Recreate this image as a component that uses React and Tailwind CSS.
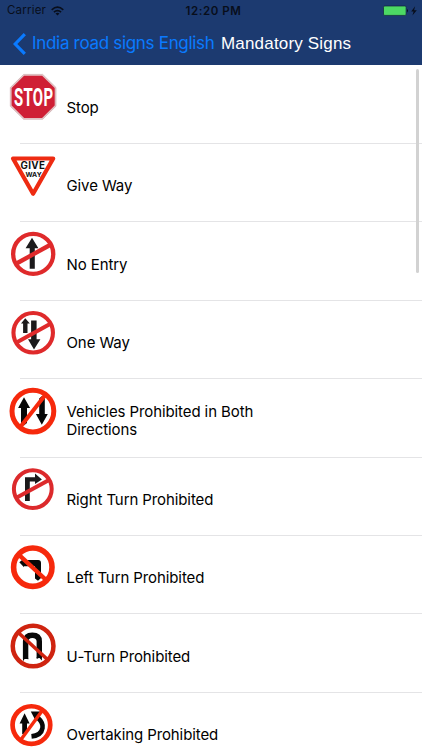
import clsx from 'clsx';

// Red ring with the diagonal bar drawn over the symbol
const Prohibited = ({ cx, cy, r, width, color, bar, barWidth, children }) => (
  <>
    <circle cx={cx} cy={cy} r={r - width / 2} fill="#fff" />
    {children}
    <path d={bar} stroke={color} strokeWidth={barWidth || width} />
    <circle cx={cx} cy={cy} r={r - width / 2} fill="none" stroke={color} strokeWidth={width} />
  </>
);

const StopSign = () => (
  <g transform="translate(0 -0.9)">
    <path d="M23.6 9.3H42.7L56 22.4V41.1L42.7 54.2H23.6L10.3 41.1V22.4Z" fill="#e4c4c6" stroke="#c8a4a6" strokeWidth="0.6" />
    <path d="M24.1 10.7H42.1L54.7 23V40.5L42.1 52.8H24.1L11.6 40.5V23Z" fill="#cf1f35" />
    <text transform="translate(33.7 41) scale(0.585 1)" textAnchor="middle" fill="#fff" className="font-['Roboto'] text-[25.5px] font-bold tracking-[0.5px]">STOP</text>
  </g>
);

const GiveWaySign = () => (
  <>
    <path d="M13 14.5H53.2L33.1 49.8Z" fill="#fff" stroke="#ee2b12" strokeWidth="4.2" strokeLinejoin="round" />
    <text x="32.9" y="25.4" textAnchor="middle" fill="#111" className="font-['Inter'] text-[9.8px] font-bold tracking-[0.3px]">GIVE</text>
    <text x="33.6" y="33" textAnchor="middle" fill="#111" className="font-['Inter'] text-[6.8px] font-bold">WAY</text>
  </>
);

const NoEntrySign = () => (
  <Prohibited cx={33.2} cy={31.9} r={22.2} width={4.3} color="#df2a2b" bar="M16.5 41.5L50 23">
    <path d="M32 15.8L38.4 26.2H34.8V46.8H29.7V26.2H25.6Z" fill="#1c1a1b" />
  </Prohibited>
);

const OneWaySign = () => (
  <Prohibited cx={33.2} cy={31.8} r={21.8} width={4.1} color="#df2a2b" bar="M16.5 41.5L50 23">
    <path d="M25.3 17.3L29.8 22.5H27.5V32H23.1V22.5H21Z" fill="#1c1a1b" />
    <path d="M31.1 19.5H36.6V38.2H40.4L34 48.6L28 38.2H31.1Z" fill="#1c1a1b" />
  </Prohibited>
);

const BothDirectionsSign = () => (
  <Prohibited cx={32.9} cy={32.1} r={23.4} width={5} color="#f6290c" bar="M20.5 47.8L44.7 16.7" barWidth={4}>
    <path d="M24 18.3L30.1 29H27V44L23.8 46.5L21 44V29H18.1Z" fill="#080808" />
    <path d="M39.2 19.5L42 17L44.8 19.5V35H47.8L41.8 45.8L35.9 35H39.2Z" fill="#080808" />
  </Prohibited>
);

const RightTurnSign = () => (
  <Prohibited cx={32.8} cy={31.1} r={20.9} width={4} color="#dc2a2c" bar="M15.5 40.3L49.5 21.8">
    <path d="M25 43.1V19.2H35V15.5L41.9 21.6L35 26V23.6H29.8V43.1Z" fill="#1c1a1b" />
  </Prohibited>
);

const LeftTurnSign = () => (
  <Prohibited cx={32.8} cy={31.2} r={22} width={5.6} color="#f6290c" bar="M18.4 18.4L47.2 45" barWidth={4.4}>
    <path d="M19.3 26.2L24 22.4V24H38.2Q41 24 41 27V42L38 44.8L35 42.6V30.2H24V31.2Z" fill="#080808" />
  </Prohibited>
);

const UTurnSign = () => (
  <Prohibited cx={33.1} cy={32} r={22.6} width={4.5} color="#cf2410" bar="M18.5 18.7L48 46" barWidth={3.6}>
    <path d="M25.6 45V27.5Q25.6 21.2 32.3 21.2Q39.3 21.2 39.3 27.5V44" fill="none" stroke="#080808" strokeWidth="5.4" />
    <path d="M23 47.3V44H28.2V45.5L25.5 43.8ZM36.7 43H41.9V46.6L39.3 43.8L36.7 45Z" fill="#080808" />
  </Prohibited>
);

const OvertakingSign = () => (
  <Prohibited cx={31.4} cy={32.1} r={21.2} width={4.7} color="#f6290c" bar="M21 46.5L42 18" barWidth={3.4}>
    <path d="M24.6 20.3L29.6 30.4H27V41H22.2V30.4H19.6Z" fill="#080808" />
    <path d="M38 25Q43.4 29.7 42.5 35Q41.3 42.3 31.5 43.4" fill="none" stroke="#080808" strokeWidth="4.6" />
    <path d="M30.8 18.6H40.6L36 28.4Z" fill="#080808" />
  </Prohibited>
);

const signs = [
  { name: 'Stop', Icon: StopSign },
  { name: 'Give Way', Icon: GiveWaySign },
  { name: 'No Entry', Icon: NoEntrySign },
  { name: 'One Way', Icon: OneWaySign },
  { name: 'Vehicles Prohibited in Both Directions', Icon: BothDirectionsSign, twoLines: true },
  { name: 'Right Turn Prohibited', Icon: RightTurnSign },
  { name: 'Left Turn Prohibited', Icon: LeftTurnSign },
  { name: 'U-Turn Prohibited', Icon: UTurnSign },
  { name: 'Overtaking Prohibited', Icon: OvertakingSign },
];

const StatusBar = () => (
  <div className="grid h-[22px] grid-cols-3 items-center pl-[7px] pr-[3px] text-[11.5px] leading-none text-[#080e1b]">
    <div className="flex items-center gap-[5px]">
      <span className="tracking-[0.2px]">Carrier</span>
      <svg width="13" height="10" viewBox="0 0 13 10" fill="none" stroke="currentColor" strokeWidth="1.6">
        <path d="M0.7 3.8Q6.5 -1.4 12.3 3.8" />
        <path d="M2.9 6.1Q6.5 3 10.1 6.1" />
        <path d="M6.5 9.6L4.5 7.6Q6.5 6 8.5 7.6Z" fill="currentColor" stroke="none" />
      </svg>
    </div>
    <span className="pl-px pt-px text-center font-semibold tracking-[0.55px]">12:20 PM</span>
    <div className="flex justify-end">
      <svg width="36" height="12" viewBox="0 0 36 12">
        <rect x="0.5" y="1" width="22.6" height="9.4" rx="1.2" fill="#4cd964" stroke="#10213a" strokeWidth="0.7" />
        <path d="M24 4Q26 5.7 24 7.4Z" fill="#080e1b" />
        <path d="M32.1 1.2L28.2 6.4H30.6L29.4 10.4L33.8 5.2H31.1Z" fill="#080e1b" />
      </svg>
    </div>
  </div>
);

const App = () => {
  return (
    <div className="relative h-[750px] w-[422px] overflow-hidden bg-white font-['Inter',sans-serif] text-black">
      {/* Navigation bar */}
      <header className="h-[65px] bg-[#1c3a70]">
        <StatusBar />
        <div className="flex h-[43px] items-center pl-[13px]">
          <svg width="13" height="22" viewBox="0 0 13 22" fill="none" stroke="#0a7aff" strokeWidth="3.2">
            <path d="M11.8 1.2L2.2 11L11.8 20.8" />
          </svg>
          <span className="ml-[6px] w-[189px] whitespace-nowrap text-[17px] tracking-[-0.31px] text-[#0a7aff]">India road signs English</span>
          <h1 className="whitespace-nowrap font-['Liberation_Sans',sans-serif] text-[17px] tracking-[0.18px] text-white">Mandatory Signs</h1>
        </div>
      </header>

      {/* Sign list */}
      <ul className="pt-[0.7px]">
        {signs.map(({ name, Icon, twoLines }) => (
          <li key={name} className="flex h-[78.4px]">
            <svg width="66" height="78" viewBox="0 0 66 78" className="shrink-0">
              <Icon />
            </svg>
            <div className="-ml-[46px] flex-1 border-b border-[#e4e4e6] pl-[46.5px]">
              <p className={clsx('w-[210px] text-[15px] leading-[18px] tracking-[-0.1px]', twoLines ? 'pt-[24px]' : 'pt-[33.3px]')}>{name}</p>
            </div>
          </li>
        ))}
      </ul>

      {/* Scroll indicator */}
      <div className="absolute right-[3.5px] top-[69px] h-[204px] w-[2.5px] rounded-full bg-[#d2d2d2]" />
    </div>
  );
};

export default App;
